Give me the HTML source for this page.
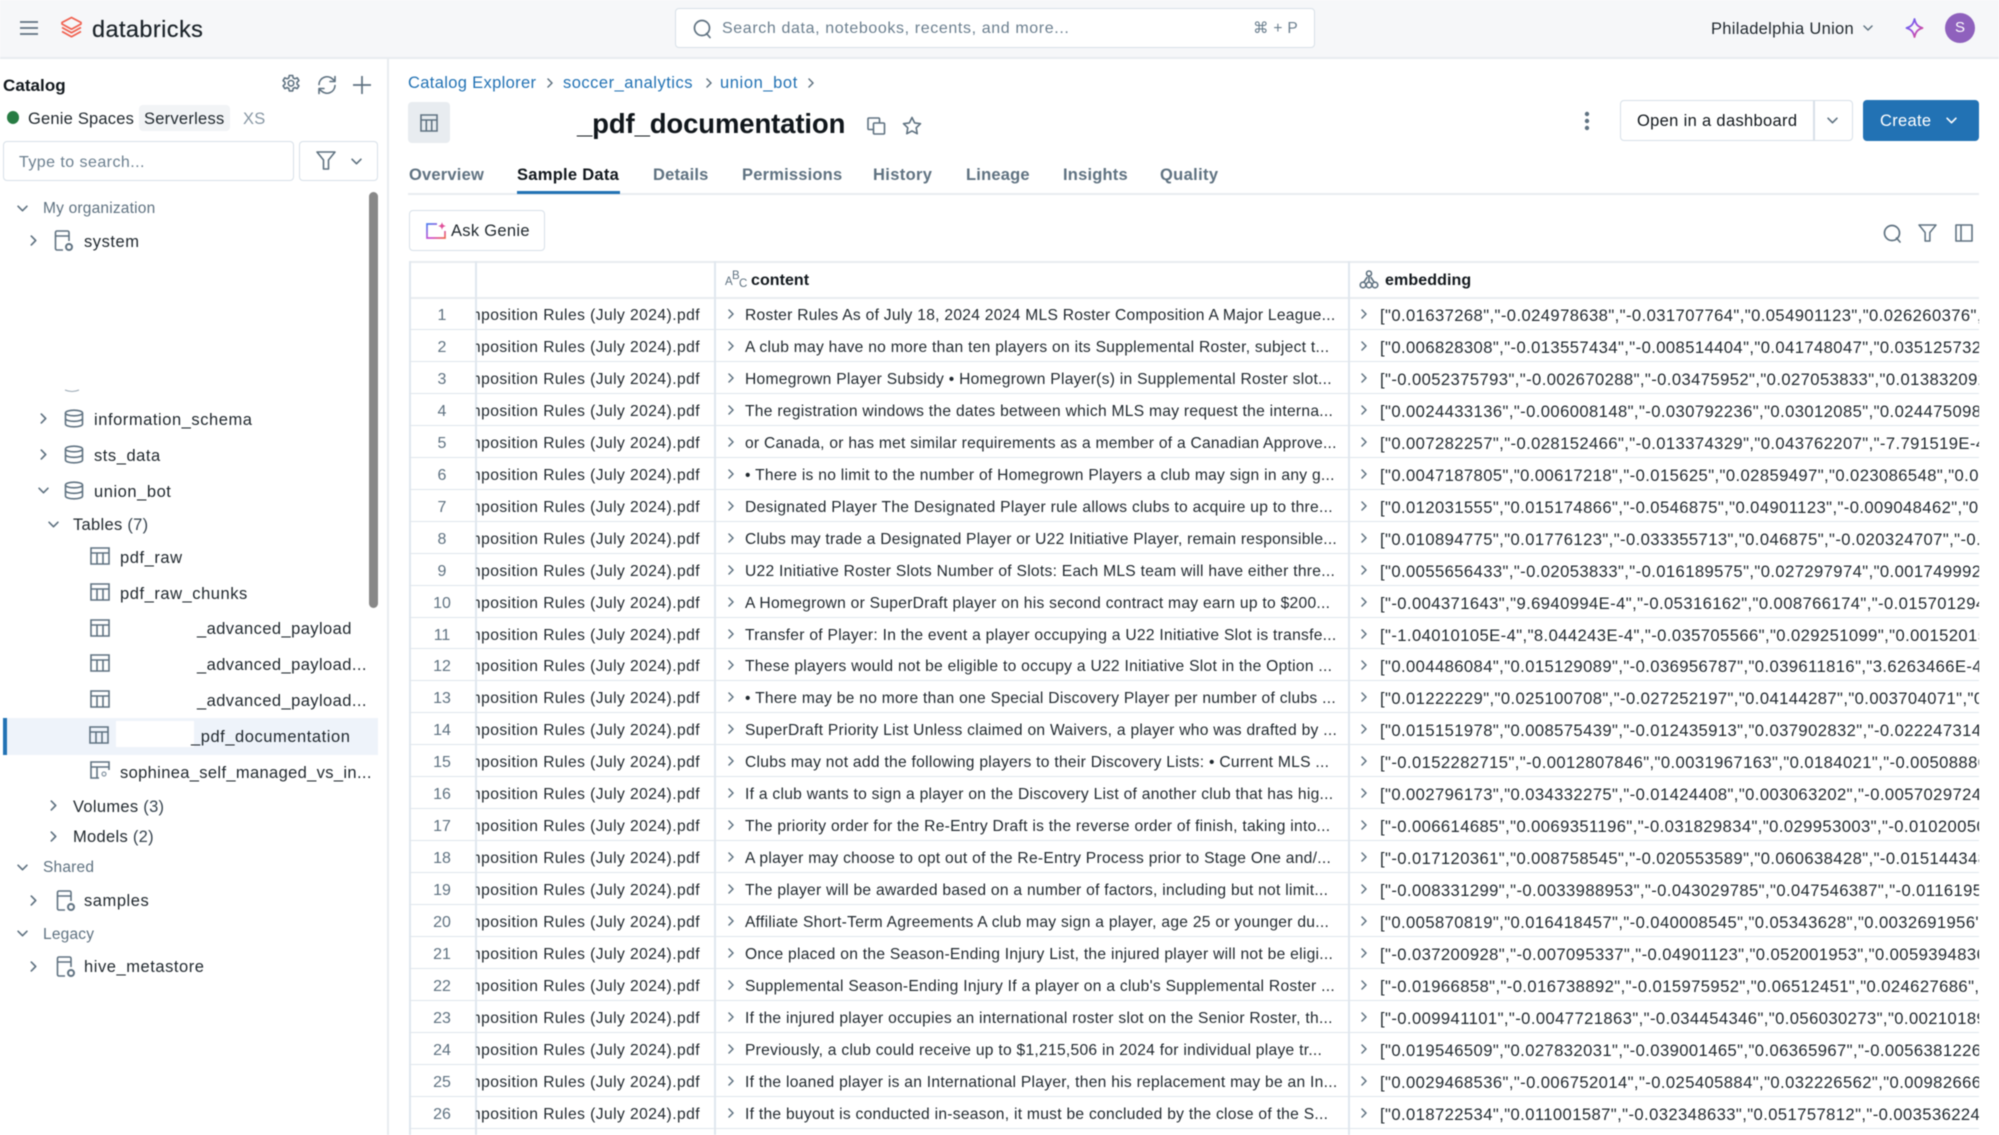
<!DOCTYPE html>
<html><head><meta charset="utf-8"><title>_pdf_documentation</title>
<style>
*{box-sizing:border-box}
html,body{margin:0;padding:0;background:#fff}
#p{position:relative;width:1999px;height:1135px;overflow:hidden;background:#fff;font-family:"Liberation Sans",sans-serif;color:#11171c;filter:blur(.45px)}
.a{position:absolute;white-space:nowrap}
.t{position:absolute;white-space:nowrap;line-height:20px;height:20px}
svg{position:absolute;overflow:visible}
.ln{fill:none;stroke:#5f7281;stroke-width:1.6;stroke-linecap:round;stroke-linejoin:round}
.tree{font-size:16.5px;letter-spacing:.55px;color:#1f272d;margin-top:1px}
.g{color:#5f7281}
.tab{position:absolute;top:166px;font-size:16.5px;font-weight:bold;color:#5f7281;line-height:20px;letter-spacing:.2px;white-space:nowrap}
#rows{position:absolute;left:409px;top:298px;width:1570px}
.r{position:relative;height:31.96px;border-bottom:1.5px solid #dfe6ed}
.n{position:absolute;left:0;width:66px;text-align:center;top:8px;line-height:20px;font-size:16px;color:#5f7281}
.f{position:absolute;left:67px;width:238px;top:0;height:30px;overflow:hidden}
.f span{position:absolute;right:14px;top:8px;line-height:20px;font-size:15.6px;letter-spacing:.45px;color:#1f272d;white-space:nowrap}
.c{position:absolute;left:336px;top:8px;line-height:20px;font-size:15.6px;letter-spacing:.28px;color:#1f272d;white-space:nowrap}
.e{position:absolute;left:971px;width:599px;top:8px;height:22px;overflow:hidden;line-height:20px;font-size:16.6px;letter-spacing:.42px;color:#1f272d;white-space:nowrap}
.ch1{left:317px;top:11px}.ch2{left:950px;top:11px}
.vl{position:absolute;top:261px;bottom:0;width:1.5px;background:#e0e7ee}
</style></head><body>
<svg width="0" height="0" style="position:absolute"><defs>
<symbol id="cr" viewBox="0 0 10 10"><path d="M3 1l4 4-4 4" fill="none" stroke="#5f7281" stroke-width="1.5" stroke-linecap="round" stroke-linejoin="round"/></symbol>
<symbol id="cd" viewBox="0 0 10 10"><path d="M1 3l4 4 4-4" fill="none" stroke="#5f7281" stroke-width="1.5" stroke-linecap="round" stroke-linejoin="round"/></symbol>
<symbol id="tb" viewBox="0 0 20 18"><path d="M1 1h18v16H1zM1 6h18M7 6v11M13 6v11" fill="none" stroke="#5f7281" stroke-width="1.6"/></symbol>
<symbol id="db" viewBox="0 0 20 18"><ellipse cx="10" cy="3.5" rx="8.5" ry="2.8" fill="none" stroke="#5f7281" stroke-width="1.6"/><path d="M1.5 3.5v11c0 1.6 3.8 2.8 8.5 2.8s8.500-1.200 8.500-2.800v-11M1.500 9c0 1.600 3.800 2.800 8.500 2.800s8.500-1.200 8.500-2.800" fill="none" stroke="#5f7281" stroke-width="1.600"/></symbol>
<symbol id="cat" viewBox="0 0 20 22"><path d="M9 20H3a1.500 1.500 0 0 1-1.500-1.500V2.500A1.500 1.500 0 0 1 3 1h10.500A1.500 1.500 0 0 1 15 2.500V11M1.500 6H15" fill="none" stroke="#5f7281" stroke-width="1.600"/><circle cx="15" cy="17" r="3" fill="none" stroke="#5f7281" stroke-width="2"/></symbol>
</defs></svg>
<div id="p">
<!-- top bar -->
<div class="a" style="left:0;top:0;width:1999px;height:59px;background:#f6f7f9;border-bottom:2px solid #e8ecf0"></div>
<svg style="left:20px;top:21px" width="19" height="14"><path d="M0 1h18M0 7h18M0 13h18" stroke="#5f7281" stroke-width="1.800" fill="none"/></svg>
<svg style="left:60px;top:16px" width="23" height="23" viewBox="0 0 23 23"><path d="M11.500 1.500L21 6.500v1.500l-9.500 5.200L2 8V6.500z" fill="none" stroke="#f0604f" stroke-width="1.700" stroke-linejoin="round"/><path d="M2 11.500l9.500 5.200 9.500-5.200M2 15.500l9.500 5.200L21 15.500" fill="none" stroke="#f0604f" stroke-width="1.700" stroke-linejoin="round"/></svg>
<div class="t" style="left:92px;top:15px;height:28px;line-height:28px;font-size:23.5px;letter-spacing:.42px;color:#1b2329;-webkit-text-stroke:.2px #1b2329">databricks</div>
<div class="a" style="left:675px;top:8px;width:640px;height:40px;background:#fff;border:1.500px solid #d8e0e8;border-radius:4px"></div>
<svg style="left:693px;top:19px" width="19" height="20"><circle cx="9" cy="9" r="7.500" fill="none" stroke="#5f7281" stroke-width="1.700"/><path d="M13.500 14.500l3.500 4" stroke="#5f7281" stroke-width="1.700" fill="none" stroke-linecap="round"/></svg>
<div class="t" style="left:722px;top:19px;font-size:16px;letter-spacing:.62px;color:#6b7f8f">Search data, notebooks, recents, and more...</div>
<div class="t" style="left:1253px;top:19px;font-size:15.500px;letter-spacing:.3px;color:#6b7f8f;font-family:'Liberation Sans','DejaVu Sans',sans-serif">⌘ + P</div>
<div class="t" style="left:1711px;top:19px;font-size:16.500px;letter-spacing:.3px;color:#1f272d">Philadelphia Union</div>
<svg style="left:1863px;top:23px" width="10" height="10"><use href="#cd" width="10" height="10"/></svg>
<svg style="left:1905px;top:18px" width="19" height="20" viewBox="0 0 19 20"><defs><linearGradient id="sp" x1="0" y1="0" x2="1" y2="1"><stop offset="0" stop-color="#4f6ef0"/><stop offset=".5" stop-color="#a04fe0"/><stop offset="1" stop-color="#f04f70"/></linearGradient></defs><path d="M9.500 1c1.200 5.200 3 7.500 8 9-5 1.500-6.800 3.800-8 9-1.200-5.200-3-7.500-8-9 5-1.500 6.800-3.800 8-9z" fill="none" stroke="url(#sp)" stroke-width="1.800" stroke-linejoin="round"/></svg>
<div class="a" style="left:1945px;top:13px;width:30px;height:30px;border-radius:50%;background:#8f61bd;color:#fff;font-size:15px;line-height:30px;text-align:center">S</div>

<!-- sidebar -->
<div class="a" style="left:387px;top:59px;width:1.500px;height:1076px;background:#e8ecf0"></div>
<div class="t" style="left:3px;top:76px;font-size:17px;font-weight:bold;letter-spacing:.05px;color:#11171c">Catalog</div>
<svg style="left:281px;top:74px" width="20" height="20" viewBox="0 0 20 20"><path d="M8.300 1.500h3.400l.5 2.500 1.700.8 2.300-1 1.700 2.800-1.900 1.700v1.800l1.900 1.700-1.700 2.800-2.300-1-1.700.8-.5 2.500H8.300l-.5-2.500-1.700-.8-2.300 1-1.700-2.800 1.900-1.700V8.300L2.100 6.600l1.700-2.800 2.300 1 1.700-.8z" class="ln" stroke-width="1.500"/><circle cx="10" cy="9.300" r="2.800" class="ln" stroke-width="1.500"/></svg>
<svg style="left:317px;top:75px" width="20" height="20" viewBox="0 0 20 20"><path d="M2 9.500A8 8 0 0 1 15.500 4L18 6M18 1.500V6.500h-5M18 10.500A8 8 0 0 1 4.500 16L2 14M2 18.500V13.500h5" class="ln" stroke-width="1.700"/></svg>
<svg style="left:353px;top:75px" width="18" height="20"><path d="M9 1v18M0 10h18" stroke="#5f7281" stroke-width="1.700" fill="none"/></svg>
<div class="a" style="left:6.500px;top:111px;width:12.500px;height:13px;border-radius:50%;background:#277c43"></div>
<div class="t" style="left:28px;top:109px;font-size:16.500px;letter-spacing:.2px;color:#1f272d">Genie Spaces</div>
<div class="a" style="left:139px;top:105px;width:91px;height:26px;background:#f2f4f6;border-radius:4px"></div>
<div class="t" style="left:144px;top:109px;font-size:16.500px;letter-spacing:.25px;color:#1f272d">Serverless</div>
<div class="t" style="left:243px;top:109px;font-size:16.500px;letter-spacing:.2px;color:#8696a3">XS</div>
<div class="a" style="left:3px;top:141px;width:291px;height:40px;border:1.500px solid #d8e0e8;border-radius:4px"></div>
<div class="t" style="left:19px;top:153px;font-size:16px;letter-spacing:.45px;color:#6b7f8f">Type to search...</div>
<div class="a" style="left:299px;top:141px;width:79px;height:40px;border:1.500px solid #d8e0e8;border-radius:4px"></div>
<svg style="left:316px;top:151px" width="20" height="19" viewBox="0 0 20 19"><path d="M1 1h18l-6.500 8v9h-5V9z" class="ln"/></svg>
<svg style="left:351px;top:156px" width="11" height="11"><use href="#cd" width="11" height="11"/></svg>
<div class="a" style="left:369px;top:192px;width:9px;height:416px;background:#888;border-radius:5px"></div>

<svg style="left:17px;top:203px" width="11" height="11"><use href="#cd" width="11" height="11"/></svg>
<div class="t tree g" style="left:43px;top:198px;letter-spacing:.2px;font-size:15.500px">My organization</div>
<svg style="left:28px;top:235px" width="11" height="11"><use href="#cr" width="11" height="11"/></svg>
<svg style="left:54px;top:230px" width="20" height="22"><use href="#cat" width="20" height="22"/></svg>
<div class="t tree" style="left:84px;top:231px">system</div>
<svg style="left:65px;top:390px" width="14" height="3"><path d="M0 0q7 3 14 0" stroke="#9aa8b4" stroke-width="1" fill="none"/></svg>

<svg style="left:38px;top:413px" width="11" height="11"><use href="#cr" width="11" height="11"/></svg>
<svg style="left:64px;top:409px" width="20" height="19"><use href="#db" width="20" height="19"/></svg>
<div class="t tree" style="left:94px;top:409px">information_schema</div>
<svg style="left:38px;top:449px" width="11" height="11"><use href="#cr" width="11" height="11"/></svg>
<svg style="left:64px;top:445px" width="20" height="19"><use href="#db" width="20" height="19"/></svg>
<div class="t tree" style="left:94px;top:445px">sts_data</div>
<svg style="left:38px;top:485px" width="11" height="11"><use href="#cd" width="11" height="11"/></svg>
<svg style="left:64px;top:481px" width="20" height="19"><use href="#db" width="20" height="19"/></svg>
<div class="t tree" style="left:94px;top:481px">union_bot</div>
<svg style="left:48px;top:519px" width="11" height="11"><use href="#cd" width="11" height="11"/></svg>
<div class="t tree" style="left:73px;top:514px;letter-spacing:.3px">Tables <span style="color:#37444f">(7)</span></div>
<svg style="left:90px;top:547px" width="20" height="18"><use href="#tb" width="20" height="18"/></svg>
<div class="t tree" style="left:120px;top:547px">pdf_raw</div>
<svg style="left:90px;top:583px" width="20" height="18"><use href="#tb" width="20" height="18"/></svg>
<div class="t tree" style="left:120px;top:583px">pdf_raw_chunks</div>
<svg style="left:90px;top:619px" width="20" height="18"><use href="#tb" width="20" height="18"/></svg>
<div class="t tree" style="left:197px;top:618px;letter-spacing:.42px">_advanced_payload</div>
<svg style="left:90px;top:654px" width="20" height="18"><use href="#tb" width="20" height="18"/></svg>
<div class="t tree" style="left:197px;top:654px;letter-spacing:.42px">_advanced_payload...</div>
<svg style="left:90px;top:690px" width="20" height="18"><use href="#tb" width="20" height="18"/></svg>
<div class="t tree" style="left:197px;top:690px;letter-spacing:.42px">_advanced_payload...</div>
<div class="a" style="left:7px;top:718px;width:371px;height:37px;background:#eef3fa"></div>
<div class="a" style="left:3px;top:718px;width:4px;height:37px;background:#2272b4"></div>
<svg style="left:89px;top:726px" width="20" height="18"><use href="#tb" width="20" height="18"/></svg>
<div class="a" style="left:116px;top:721px;width:78px;height:26px;background:#fff"></div>
<div class="t tree" style="left:191px;top:726px">_pdf_documentation</div>
<svg style="left:90px;top:761px" width="20" height="18" viewBox="0 0 20 18"><path d="M9 17H1V1h18v8M1 6h18M7 6v11" fill="none" stroke="#5f7281" stroke-width="1.600"/><circle cx="14" cy="13" r="2" fill="none" stroke="#8696a3" stroke-width="1.200"/></svg>
<div class="t tree" style="left:120px;top:762px;letter-spacing:.35px">sophinea_self_managed_vs_in...</div>
<svg style="left:48px;top:800px" width="11" height="11"><use href="#cr" width="11" height="11"/></svg>
<div class="t tree" style="left:73px;top:796px;letter-spacing:.3px">Volumes <span style="color:#37444f">(3)</span></div>
<svg style="left:48px;top:831px" width="11" height="11"><use href="#cr" width="11" height="11"/></svg>
<div class="t tree" style="left:73px;top:826px;letter-spacing:.3px">Models <span style="color:#37444f">(2)</span></div>
<svg style="left:17px;top:862px" width="11" height="11"><use href="#cd" width="11" height="11"/></svg>
<div class="t tree g" style="left:43px;top:857px;letter-spacing:.2px;font-size:15.500px">Shared</div>
<svg style="left:28px;top:895px" width="11" height="11"><use href="#cr" width="11" height="11"/></svg>
<svg style="left:56px;top:890px" width="20" height="22"><use href="#cat" width="20" height="22"/></svg>
<div class="t tree" style="left:84px;top:890px">samples</div>
<svg style="left:17px;top:928px" width="11" height="11"><use href="#cd" width="11" height="11"/></svg>
<div class="t tree g" style="left:43px;top:924px;letter-spacing:.2px;font-size:15.500px">Legacy</div>
<svg style="left:28px;top:961px" width="11" height="11"><use href="#cr" width="11" height="11"/></svg>
<svg style="left:56px;top:956px" width="20" height="22"><use href="#cat" width="20" height="22"/></svg>
<div class="t tree" style="left:84px;top:956px">hive_metastore</div>

<!-- main header -->
<div class="t" style="left:408px;top:73px;font-size:16.500px;letter-spacing:.34px;color:#2272b4">Catalog Explorer</div>
<svg style="left:545px;top:78px" width="10" height="10"><use href="#cr" width="10" height="10"/></svg>
<div class="t" style="left:563px;top:73px;font-size:16.500px;letter-spacing:.5px;color:#2272b4">soccer_analytics</div>
<svg style="left:704px;top:78px" width="10" height="10"><use href="#cr" width="10" height="10"/></svg>
<div class="t" style="left:720px;top:73px;font-size:16.500px;letter-spacing:.6px;color:#2272b4">union_bot</div>
<svg style="left:806px;top:78px" width="10" height="10"><use href="#cr" width="10" height="10"/></svg>
<div class="a" style="left:408px;top:102px;width:42px;height:41px;background:#e8ecf0;border-radius:4px"></div>
<svg style="left:420px;top:114px" width="18" height="18" viewBox="0 0 18 18"><path d="M1 1h16v16H1zM1 6h16M6.300 6v11M11.700 6v11" fill="none" stroke="#5f7281" stroke-width="1.600"/></svg>
<div class="t" style="left:577px;top:107px;height:34px;line-height:34px;font-size:27.500px;font-weight:bold;letter-spacing:-.12px;color:#11171c">_pdf_documentation</div>
<svg style="left:867px;top:117px" width="19" height="18" viewBox="0 0 19 18"><path d="M5.500 12.500H2A1 1 0 0 1 1 11.500V2a1 1 0 0 1 1-1h9.500a1 1 0 0 1 1 1v3.500" class="ln"/><rect x="6.500" y="6" width="11" height="11" rx="1" class="ln"/></svg>
<svg style="left:902px;top:116px" width="20" height="19" viewBox="0 0 20 19"><path d="M10 1.500l2.600 5.400 5.900.8-4.300 4.100 1 5.900-5.200-2.800-5.200 2.800 1-5.900L1.500 7.700l5.900-.8z" class="ln"/></svg>
<svg style="left:1584px;top:110px" width="6" height="22"><circle cx="3" cy="4" r="2.200" fill="#5f7281"/><circle cx="3" cy="11" r="2.200" fill="#5f7281"/><circle cx="3" cy="18" r="2.200" fill="#5f7281"/></svg>
<div class="a" style="left:1620px;top:100px;width:233px;height:41px;border:1.500px solid #d8e0e8;border-radius:4px"></div>
<div class="a" style="left:1813px;top:100px;width:1.500px;height:41px;background:#d8e0e8"></div>
<div class="t" style="left:1637px;top:111px;font-size:16.500px;letter-spacing:.33px;color:#11171c">Open in a dashboard</div>
<svg style="left:1827px;top:115px" width="11" height="11"><use href="#cd" width="11" height="11"/></svg>
<div class="a" style="left:1863px;top:100px;width:116px;height:41px;background:#2272b4;border-radius:4px"></div>
<div class="t" style="left:1880px;top:111px;font-size:16.500px;letter-spacing:.3px;color:#fff">Create</div>
<svg style="left:1946px;top:115px" width="11" height="11" viewBox="0 0 10 10"><path d="M1 3l4 4 4-4" fill="none" stroke="#fff" stroke-width="1.500" stroke-linecap="round" stroke-linejoin="round"/></svg>

<!-- tabs -->
<div class="tab" style="left:409px;top:165px">Overview</div>
<div class="tab" style="left:517px;top:165px;color:#11171c;letter-spacing:.28px">Sample Data</div>
<div class="tab" style="left:653px;top:165px">Details</div>
<div class="tab" style="left:742px;top:165px">Permissions</div>
<div class="tab" style="left:873px;top:165px;letter-spacing:.35px">History</div>
<div class="tab" style="left:966px;top:165px">Lineage</div>
<div class="tab" style="left:1063px;top:165px">Insights</div>
<div class="tab" style="left:1160px;top:165px;letter-spacing:.35px">Quality</div>
<div class="a" style="left:408px;top:193px;width:1571px;height:2px;background:#e8ecf0"></div>
<div class="a" style="left:517px;top:191px;width:103px;height:3px;background:#2272b4"></div>

<!-- toolbar -->
<div class="a" style="left:409px;top:210px;width:136px;height:41px;border:1.500px solid #d8e0e8;border-radius:4px"></div>
<svg style="left:425px;top:222px" width="22" height="17" viewBox="0 0 22 17"><defs><linearGradient id="ag" x1="0" y1="0" x2="1" y2="1"><stop offset="0" stop-color="#4f7ff0"/><stop offset=".6" stop-color="#d04fd0"/><stop offset="1" stop-color="#f06a50"/></linearGradient></defs><path d="M12 2H2v14h18v-7" fill="none" stroke="url(#ag)" stroke-width="1.700"/><path d="M17 0c.5 2.500 1.300 3.500 4 4-2.700.5-3.500 1.500-4 4-.5-2.500-1.300-3.500-4-4 2.700-.5 3.500-1.500 4-4z" fill="#e0509a"/></svg>
<div class="t" style="left:451px;top:221px;font-size:16.500px;letter-spacing:.3px;color:#1f272d">Ask Genie</div>
<svg style="left:1883px;top:224px" width="19" height="19"><circle cx="9" cy="9" r="7.500" fill="none" stroke="#5f7281" stroke-width="1.700"/><path d="M13.500 14l3.500 4" stroke="#5f7281" stroke-width="1.700" fill="none" stroke-linecap="round"/></svg>
<svg style="left:1918px;top:224px" width="19" height="18" viewBox="0 0 20 19"><path d="M1 1h18l-6.500 8v9h-5V9z" class="ln"/></svg>
<svg style="left:1955px;top:224px" width="18" height="18" viewBox="0 0 18 18"><path d="M1 1h16v16H1zM6 1v16" class="ln"/></svg>

<!-- table -->
<div class="a" style="left:409px;top:261px;width:1570px;height:2px;background:#e8ecf0"></div>
<div class="a" style="left:409px;top:297px;width:1570px;height:2px;background:#e8ecf0"></div>
<div class="vl" style="left:409px"></div><div class="vl" style="left:475px"></div><div class="vl" style="left:714px"></div><div class="vl" style="left:1348px"></div>
<div class="a" style="left:725px;top:276px;font-size:11.500px;line-height:12px;color:#5f7281">A</div>
<div class="a" style="left:732px;top:270px;font-size:11.500px;line-height:12px;color:#5f7281">B</div>
<div class="a" style="left:739px;top:278px;font-size:11.500px;line-height:12px;color:#5f7281">C</div>
<div class="t" style="left:751px;top:271px;font-size:16px;font-weight:bold;letter-spacing:.05px;color:#11171c">content</div>
<svg style="left:1359px;top:270px" width="20" height="19" viewBox="0 0 20 19"><circle cx="10" cy="3.500" r="2.500" class="ln" stroke-width="1.300"/><circle cx="4" cy="15" r="2.800" class="ln" stroke-width="1.300"/><circle cx="10" cy="15" r="2.800" class="ln" stroke-width="1.300"/><circle cx="16" cy="15" r="2.800" class="ln" stroke-width="1.300"/><path d="M10 6v6M8 7.500L5 12M12 7.500l3 4.500" class="ln" stroke-width="1.300"/></svg>
<div class="t" style="left:1385px;top:271px;font-size:16px;font-weight:bold;letter-spacing:.1px;color:#11171c">embedding</div>

<div id="rows">
<div class="r"><div class="n">1</div><div class="f"><span>Composition Rules (July 2024).pdf</span></div><svg class="ch1" width="10" height="10"><use href="#cr" width="10" height="10"/></svg><div class="c">Roster Rules As of July 18, 2024 2024 MLS Roster Composition A Major League...</div><svg class="ch2" width="10" height="10"><use href="#cr" width="10" height="10"/></svg><div class="e">["0.01637268","-0.024978638","-0.031707764","0.054901123","0.026260376","0.0</div></div>
<div class="r"><div class="n">2</div><div class="f"><span>Composition Rules (July 2024).pdf</span></div><svg class="ch1" width="10" height="10"><use href="#cr" width="10" height="10"/></svg><div class="c">A club may have no more than ten players on its Supplemental Roster, subject t...</div><svg class="ch2" width="10" height="10"><use href="#cr" width="10" height="10"/></svg><div class="e">["0.006828308","-0.013557434","-0.008514404","0.041748047","0.035125732","0.0</div></div>
<div class="r"><div class="n">3</div><div class="f"><span>Composition Rules (July 2024).pdf</span></div><svg class="ch1" width="10" height="10"><use href="#cr" width="10" height="10"/></svg><div class="c">Homegrown Player Subsidy • Homegrown Player(s) in Supplemental Roster slot...</div><svg class="ch2" width="10" height="10"><use href="#cr" width="10" height="10"/></svg><div class="e">["-0.0052375793","-0.002670288","-0.03475952","0.027053833","0.013832092","0.0</div></div>
<div class="r"><div class="n">4</div><div class="f"><span>Composition Rules (July 2024).pdf</span></div><svg class="ch1" width="10" height="10"><use href="#cr" width="10" height="10"/></svg><div class="c">The registration windows the dates between which MLS may request the interna...</div><svg class="ch2" width="10" height="10"><use href="#cr" width="10" height="10"/></svg><div class="e">["0.0024433136","-0.006008148","-0.030792236","0.03012085","0.024475098","0.0</div></div>
<div class="r"><div class="n">5</div><div class="f"><span>Composition Rules (July 2024).pdf</span></div><svg class="ch1" width="10" height="10"><use href="#cr" width="10" height="10"/></svg><div class="c" style="letter-spacing:.26px">or Canada, or has met similar requirements as a member of a Canadian Approve...</div><svg class="ch2" width="10" height="10"><use href="#cr" width="10" height="10"/></svg><div class="e">["0.007282257","-0.028152466","-0.013374329","0.043762207","-7.791519E-4","0.0</div></div>
<div class="r"><div class="n">6</div><div class="f"><span>Composition Rules (July 2024).pdf</span></div><svg class="ch1" width="10" height="10"><use href="#cr" width="10" height="10"/></svg><div class="c">• There is no limit to the number of Homegrown Players a club may sign in any g...</div><svg class="ch2" width="10" height="10"><use href="#cr" width="10" height="10"/></svg><div class="e">["0.0047187805","0.00617218","-0.015625","0.02859497","0.023086548","0.01</div></div>
<div class="r"><div class="n">7</div><div class="f"><span>Composition Rules (July 2024).pdf</span></div><svg class="ch1" width="10" height="10"><use href="#cr" width="10" height="10"/></svg><div class="c">Designated Player The Designated Player rule allows clubs to acquire up to thre...</div><svg class="ch2" width="10" height="10"><use href="#cr" width="10" height="10"/></svg><div class="e">["0.012031555","0.015174866","-0.0546875","0.04901123","-0.009048462","0.0</div></div>
<div class="r"><div class="n">8</div><div class="f"><span>Composition Rules (July 2024).pdf</span></div><svg class="ch1" width="10" height="10"><use href="#cr" width="10" height="10"/></svg><div class="c" style="letter-spacing:.24px">Clubs may trade a Designated Player or U22 Initiative Player, remain responsible...</div><svg class="ch2" width="10" height="10"><use href="#cr" width="10" height="10"/></svg><div class="e">["0.010894775","0.01776123","-0.033355713","0.046875","-0.020324707","-0.0</div></div>
<div class="r"><div class="n">9</div><div class="f"><span>Composition Rules (July 2024).pdf</span></div><svg class="ch1" width="10" height="10"><use href="#cr" width="10" height="10"/></svg><div class="c">U22 Initiative Roster Slots Number of Slots: Each MLS team will have either thre...</div><svg class="ch2" width="10" height="10"><use href="#cr" width="10" height="10"/></svg><div class="e">["0.0055656433","-0.02053833","-0.016189575","0.027297974","0.001749992","0.0</div></div>
<div class="r"><div class="n">10</div><div class="f"><span>Composition Rules (July 2024).pdf</span></div><svg class="ch1" width="10" height="10"><use href="#cr" width="10" height="10"/></svg><div class="c">A Homegrown or SuperDraft player on his second contract may earn up to $200...</div><svg class="ch2" width="10" height="10"><use href="#cr" width="10" height="10"/></svg><div class="e">["-0.004371643","9.6940994E-4","-0.05316162","0.008766174","-0.015701294","0.0</div></div>
<div class="r"><div class="n">11</div><div class="f"><span>Composition Rules (July 2024).pdf</span></div><svg class="ch1" width="10" height="10"><use href="#cr" width="10" height="10"/></svg><div class="c">Transfer of Player: In the event a player occupying a U22 Initiative Slot is transfe...</div><svg class="ch2" width="10" height="10"><use href="#cr" width="10" height="10"/></svg><div class="e">["-1.04010105E-4","8.044243E-4","-0.035705566","0.029251099","0.00152015","0.0</div></div>
<div class="r"><div class="n">12</div><div class="f"><span>Composition Rules (July 2024).pdf</span></div><svg class="ch1" width="10" height="10"><use href="#cr" width="10" height="10"/></svg><div class="c">These players would not be eligible to occupy a U22 Initiative Slot in the Option ...</div><svg class="ch2" width="10" height="10"><use href="#cr" width="10" height="10"/></svg><div class="e">["0.004486084","0.015129089","-0.036956787","0.039611816","3.6263466E-4","0.0</div></div>
<div class="r"><div class="n">13</div><div class="f"><span>Composition Rules (July 2024).pdf</span></div><svg class="ch1" width="10" height="10"><use href="#cr" width="10" height="10"/></svg><div class="c">• There may be no more than one Special Discovery Player per number of clubs ...</div><svg class="ch2" width="10" height="10"><use href="#cr" width="10" height="10"/></svg><div class="e">["0.01222229","0.025100708","-0.027252197","0.04144287","0.003704071","0.0</div></div>
<div class="r"><div class="n">14</div><div class="f"><span>Composition Rules (July 2024).pdf</span></div><svg class="ch1" width="10" height="10"><use href="#cr" width="10" height="10"/></svg><div class="c">SuperDraft Priority List Unless claimed on Waivers, a player who was drafted by ...</div><svg class="ch2" width="10" height="10"><use href="#cr" width="10" height="10"/></svg><div class="e">["0.015151978","0.008575439","-0.012435913","0.037902832","-0.022247314","0.0</div></div>
<div class="r"><div class="n">15</div><div class="f"><span>Composition Rules (July 2024).pdf</span></div><svg class="ch1" width="10" height="10"><use href="#cr" width="10" height="10"/></svg><div class="c">Clubs may not add the following players to their Discovery Lists: • Current MLS ...</div><svg class="ch2" width="10" height="10"><use href="#cr" width="10" height="10"/></svg><div class="e">["-0.0152282715","-0.0012807846","0.0031967163","0.0184021","-0.00508880","0.0</div></div>
<div class="r"><div class="n">16</div><div class="f"><span>Composition Rules (July 2024).pdf</span></div><svg class="ch1" width="10" height="10"><use href="#cr" width="10" height="10"/></svg><div class="c">If a club wants to sign a player on the Discovery List of another club that has hig...</div><svg class="ch2" width="10" height="10"><use href="#cr" width="10" height="10"/></svg><div class="e">["0.002796173","0.034332275","-0.01424408","0.003063202","-0.0057029724","0.0</div></div>
<div class="r"><div class="n">17</div><div class="f"><span>Composition Rules (July 2024).pdf</span></div><svg class="ch1" width="10" height="10"><use href="#cr" width="10" height="10"/></svg><div class="c">The priority order for the Re-Entry Draft is the reverse order of finish, taking into...</div><svg class="ch2" width="10" height="10"><use href="#cr" width="10" height="10"/></svg><div class="e">["-0.006614685","0.0069351196","-0.031829834","0.029953003","-0.01020050","0.0</div></div>
<div class="r"><div class="n">18</div><div class="f"><span>Composition Rules (July 2024).pdf</span></div><svg class="ch1" width="10" height="10"><use href="#cr" width="10" height="10"/></svg><div class="c">A player may choose to opt out of the Re-Entry Process prior to Stage One and/...</div><svg class="ch2" width="10" height="10"><use href="#cr" width="10" height="10"/></svg><div class="e">["-0.017120361","0.008758545","-0.020553589","0.060638428","-0.015144348","0.0</div></div>
<div class="r"><div class="n">19</div><div class="f"><span>Composition Rules (July 2024).pdf</span></div><svg class="ch1" width="10" height="10"><use href="#cr" width="10" height="10"/></svg><div class="c">The player will be awarded based on a number of factors, including but not limit...</div><svg class="ch2" width="10" height="10"><use href="#cr" width="10" height="10"/></svg><div class="e">["-0.008331299","-0.0033988953","-0.043029785","0.047546387","-0.0116195","0.0</div></div>
<div class="r"><div class="n">20</div><div class="f"><span>Composition Rules (July 2024).pdf</span></div><svg class="ch1" width="10" height="10"><use href="#cr" width="10" height="10"/></svg><div class="c">Affiliate Short-Term Agreements A club may sign a player, age 25 or younger du...</div><svg class="ch2" width="10" height="10"><use href="#cr" width="10" height="10"/></svg><div class="e">["0.005870819","0.016418457","-0.040008545","0.05343628","0.0032691956","0.0</div></div>
<div class="r"><div class="n">21</div><div class="f"><span>Composition Rules (July 2024).pdf</span></div><svg class="ch1" width="10" height="10"><use href="#cr" width="10" height="10"/></svg><div class="c">Once placed on the Season-Ending Injury List, the injured player will not be eligi...</div><svg class="ch2" width="10" height="10"><use href="#cr" width="10" height="10"/></svg><div class="e">["-0.037200928","-0.007095337","-0.04901123","0.052001953","0.0059394836","0.0</div></div>
<div class="r"><div class="n">22</div><div class="f"><span>Composition Rules (July 2024).pdf</span></div><svg class="ch1" width="10" height="10"><use href="#cr" width="10" height="10"/></svg><div class="c">Supplemental Season-Ending Injury If a player on a club's Supplemental Roster ...</div><svg class="ch2" width="10" height="10"><use href="#cr" width="10" height="10"/></svg><div class="e">["-0.01966858","-0.016738892","-0.015975952","0.06512451","0.024627686","0.0</div></div>
<div class="r"><div class="n">23</div><div class="f"><span>Composition Rules (July 2024).pdf</span></div><svg class="ch1" width="10" height="10"><use href="#cr" width="10" height="10"/></svg><div class="c">If the injured player occupies an international roster slot on the Senior Roster, th...</div><svg class="ch2" width="10" height="10"><use href="#cr" width="10" height="10"/></svg><div class="e">["-0.009941101","-0.0047721863","-0.034454346","0.056030273","0.00210189","0.0</div></div>
<div class="r"><div class="n">24</div><div class="f"><span>Composition Rules (July 2024).pdf</span></div><svg class="ch1" width="10" height="10"><use href="#cr" width="10" height="10"/></svg><div class="c">Previously, a club could receive up to $1,215,506 in 2024 for individual playe tr...</div><svg class="ch2" width="10" height="10"><use href="#cr" width="10" height="10"/></svg><div class="e">["0.019546509","0.027832031","-0.039001465","0.06365967","-0.0056381226","0.0</div></div>
<div class="r"><div class="n">25</div><div class="f"><span>Composition Rules (July 2024).pdf</span></div><svg class="ch1" width="10" height="10"><use href="#cr" width="10" height="10"/></svg><div class="c">If the loaned player is an International Player, then his replacement may be an In...</div><svg class="ch2" width="10" height="10"><use href="#cr" width="10" height="10"/></svg><div class="e">["0.0029468536","-0.006752014","-0.025405884","0.032226562","0.00982666","0.0</div></div>
<div class="r"><div class="n">26</div><div class="f"><span>Composition Rules (July 2024).pdf</span></div><svg class="ch1" width="10" height="10"><use href="#cr" width="10" height="10"/></svg><div class="c">If the buyout is conducted in-season, it must be concluded by the close of the S...</div><svg class="ch2" width="10" height="10"><use href="#cr" width="10" height="10"/></svg><div class="e">["0.018722534","0.011001587","-0.032348633","0.051757812","-0.003536224","0.0</div></div>
</div>
</div>
</body></html>
